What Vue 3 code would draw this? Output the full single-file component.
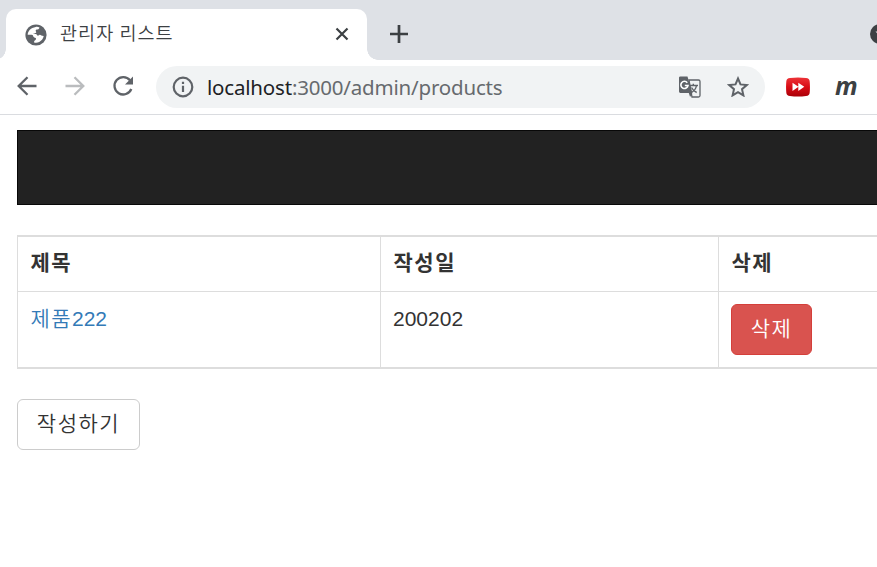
<script setup>
const columns = ['제목', '작성일', '삭제']
const products = [{ name: '제품', number: '222', date: '200202' }]
</script>

<template>
  <div class="window">
    <div class="tabstrip">
      <div class="tab">
        <svg class="globe" viewBox="0 0 22 22">
          <circle cx="11" cy="11" r="10.6" fill="#5f6368" />
          <path d="M10.8 2.9c1.5-.3 2.8.1 3.8.8-.7.4-.5 1.3-1.3 1.6-1 .3-2.3.1-2.6 1.1-.3.8.9 1.1.5 2-.5.9-2.3.5-2.9 1.1.5.6 1.7.2 2.6.5.9.3 1 1.4 1.9 1.7.9.2 1.1-1 2.1-.9 1 .1 1.6 1.3 3.8 1.3-.4 2.5-2 4.8-4.5 5.9-1.7.8-3.6 1-5.1.4.1-1.2-.1-1.6.8-2 .8-.5 1.2-.8 1.1-1.8-.2-1-1.6-.8-2.3-1.5-.7-.8-.3-1.700-1.200-2.200-1.400-.5-3.200-.1-4.800-.1 0-3.800 3.100-7.200 8.100-7.900z" fill="#fff" />
        </svg>
        <span class="tab-title">관리자 리스트</span>
        <svg class="close" viewBox="0 0 14 14"><path d="M1.500 1.500 12.500 12.500M12.500 1.500 1.500 12.500" stroke="#3c4043" stroke-width="2.200" /></svg>
      </div>
      <svg class="plus" viewBox="0 0 18 18"><path d="M9 0v18M0 9h18" stroke="#3c4043" stroke-width="2.700" /></svg>
      <svg class="profile" viewBox="0 0 20 20"><circle cx="10" cy="10" r="10" fill="#3c4043" /><path d="M5.500 7.500l4.500 5 4.500-5z" fill="#dee1e6" /></svg>
    </div>

    <div class="toolbar">
      <svg class="nav back" viewBox="0 0 20 20"><path d="M19.500 10H2M10.500 1.200 1.700 10l8.800 8.800" fill="none" stroke="#5f6368" stroke-width="2.300" /></svg>
      <svg class="nav forward" viewBox="0 0 20 20"><path d="M.5 10H18M9.500 1.200 18.300 10l-8.800 8.800" fill="none" stroke="#babcbe" stroke-width="2.300" /></svg>
      <svg class="nav reload" viewBox="0 0 22 22"><path d="M18 5.300A8.700 8.700 0 1 0 19.300 14" fill="none" stroke="#5f6368" stroke-width="2.300" /><path d="M21 1.500v8h-8z" fill="#5f6368" /></svg>
      <div class="omnibox">
        <svg class="info" viewBox="0 0 22 22"><circle cx="11" cy="11" r="9.300" fill="none" stroke="#5f6368" stroke-width="2.200" /><path d="M11 9.700v6.300M11 5.700v2.300" stroke="#5f6368" stroke-width="2.200" /></svg>
        <span class="url"><span class="host">localhost</span>:3000/admin/products</span>
        <svg class="translate" viewBox="0 0 22 22">
          <path d="M10 4h9.500c.8 0 1.500.7 1.500 1.500v14c0 .8-.7 1.500-1.500 1.500H13z" fill="#f1f3f4" stroke="#5f6368" stroke-width="1.300" />
          <path d="M10.500 9.500H19M14.300 7.800v1.700M17.500 9.500c-.5 3-2.500 5.500-5 7M12.500 11.500c1 2 3 4 5.200 5" fill="none" stroke="#5f6368" stroke-width="1.400" />
          <path d="M1.500.5h7l4.800 16.500h-11.800A1.400 1.400 0 0 1 0 15.600V2A1.400 1.400 0 0 1 1.500.5zM9.800 17h3.600l-2.300 4z" fill="#5f6368" />
          <path d="M8.300 6.700A3.600 3.600 0 1 0 9 9.500H5.800" fill="none" stroke="#fff" stroke-width="1.600" />
        </svg>
        <svg class="star" viewBox="0 0 22 21"><path d="M11 2.500l2.500 5.900 6.300.6-4.800 4.200 1.400 6.200-5.400-3.300-5.400 3.300L7 13.200 2.200 9l6.300-.6z" fill="none" stroke="#5f6368" stroke-width="2" /></svg>
      </div>
      <svg class="video" viewBox="0 0 24 20">
        <defs><linearGradient id="red" x1="0" y1="0" x2="0" y2="1"><stop offset="0" stop-color="#ed3438" /><stop offset=".5" stop-color="#d90c15" /><stop offset="1" stop-color="#a90008" /></linearGradient></defs>
        <path d="M4 1Q12-.2 20 1q3.500.3 3.700 3.500.5 5.500 0 11-.2 3.200-3.700 3.500-8 1.200-16 0-3.500-.3-3.700-3.500-.5-5.500 0-11Q.5 1.300 4 1z" fill="url(#red)" />
        <path d="M6.500 5.700l6 4.100-6 4.100zM12.300 5.700l6 4.100-6 4.100z" fill="#fff" />
      </svg>
      <span class="extension">m</span>
    </div>

    <main class="page">
      <nav class="navbar"></nav>
      <table>
        <thead>
          <tr><th v-for="column in columns" :key="column">{{ column }}</th></tr>
        </thead>
        <tbody>
          <tr v-for="product in products" :key="product.number">
            <td><a><span class="ko">{{ product.name }}</span>{{ product.number }}</a></td>
            <td>{{ product.date }}</td>
            <td class="action"><button class="btn danger">삭제</button></td>
          </tr>
        </tbody>
      </table>
      <button class="btn create">작성하기</button>
    </main>
  </div>
</template>

<style>
body { margin: 0; background: #fff; overflow: hidden; }
</style>

<style scoped>
* { box-sizing: border-box; }
.window { width: 877px; height: 567px; overflow: hidden; background: #fff; }
svg { display: block; flex: none; }
.tabstrip { height: 60px; padding: 9px 0 0 6px; display: flex; background: #dee1e6; }
.tab { position: relative; flex: none; width: 361px; height: 51px; padding: 0 18px 0 19px; display: flex; align-items: center; background: #fff; border-radius: 10px 10px 0 0; }
.tab::before, .tab::after { content: ""; position: absolute; bottom: 0; width: 11px; height: 11px; }
.tab::before { left: -11px; background: radial-gradient(circle at 0 0, transparent 10.5px, #fff 11px); }
.tab::after { right: -11px; background: radial-gradient(circle at 100% 0, transparent 10.500px, #fff 11px); }
.globe { width: 22px; height: 22px; }
.tab-title { flex: 1; margin-left: 13px; margin-top: -6px; color: #3c4043; font: 350 18.500px/26px "Noto Sans CJK KR", sans-serif; letter-spacing: 1.05px; white-space: nowrap; }
.close { width: 14px; height: 14px; margin-top: -1px; }
.plus { width: 18px; height: 18px; margin: 16px 0 0 23px; }
.profile { width: 20px; height: 20px; margin: 15px 0 0 462px; }
.toolbar { height: 55px; padding: 6px 0 0 17px; display: flex; align-items: flex-start; border-bottom: 1px solid #dadce0; }
.nav { width: 20px; height: 20px; margin-top: 10px; }
.forward { margin-left: 28px; }
.reload { width: 22px; height: 22px; margin: 9px 0 0 27px; }
.omnibox { width: 609px; height: 42px; margin-left: 22px; padding: 0 16px 0 16px; display: flex; align-items: center; border-radius: 21px; background: #f1f3f4; }
.info { width: 22px; height: 22px; }
.url { flex: 1; margin-left: 13px; color: #666a6e; font: 20.500px/30px "Noto Sans", sans-serif; letter-spacing: -.19px; white-space: nowrap; }
.host { color: #202124; }
.translate { width: 22px; height: 22px; }
.star { width: 22px; height: 21px; margin-left: 26px; margin-top: -1px; }
.video { width: 24px; height: 20px; margin: 11px 0 0 21px; }
.extension { margin: 5px 0 0 25px; color: #3c4043; font: italic 700 25px/28px "Open Sans", sans-serif; }
.page { padding: 15px 0 0 17px; }
.navbar { width: 1000px; height: 75px; margin-bottom: 30px; background: #222; border: 1px solid #080808; }
table { width: 1000px; table-layout: fixed; border-spacing: 0; border: solid #ddd; border-width: 2px 0 2px 1px; font: 21px/30px "Liberation Sans", "Noto Sans CJK KR", sans-serif; color: #333; }
th, td { height: 75px; padding: 12px; text-align: left; vertical-align: top; border-right: 1px solid #ddd; }
th { height: 55px; padding: 9px 13px 11px 12.500px; border-bottom: 1px solid #ddd; font-family: "Noto Sans CJK KR", sans-serif; font-weight: 700; letter-spacing: 1.5px; }
th:nth-child(1) { width: 363px; }
th:nth-child(2) { width: 338px; }
td:first-child { padding-left: 12.500px; }
a { color: #337ab7; }
.ko { font-family: "Noto Sans CJK KR", sans-serif; font-weight: 350; letter-spacing: 1.4px; line-height: 1; }
.btn { display: block; height: 51px; padding: 0 0 5px; border: 1px solid #ccc; border-radius: 6px; background: #fff; color: #333; font: 350 21px/30px "Noto Sans CJK KR", sans-serif; letter-spacing: 1.5px; text-align: center; }
.danger { width: 81px; color: #fff; background: #d9534f; border-color: #d43f3a; }
.create { width: 123px; padding-bottom: 6px; margin-top: 30px; }
</style>
